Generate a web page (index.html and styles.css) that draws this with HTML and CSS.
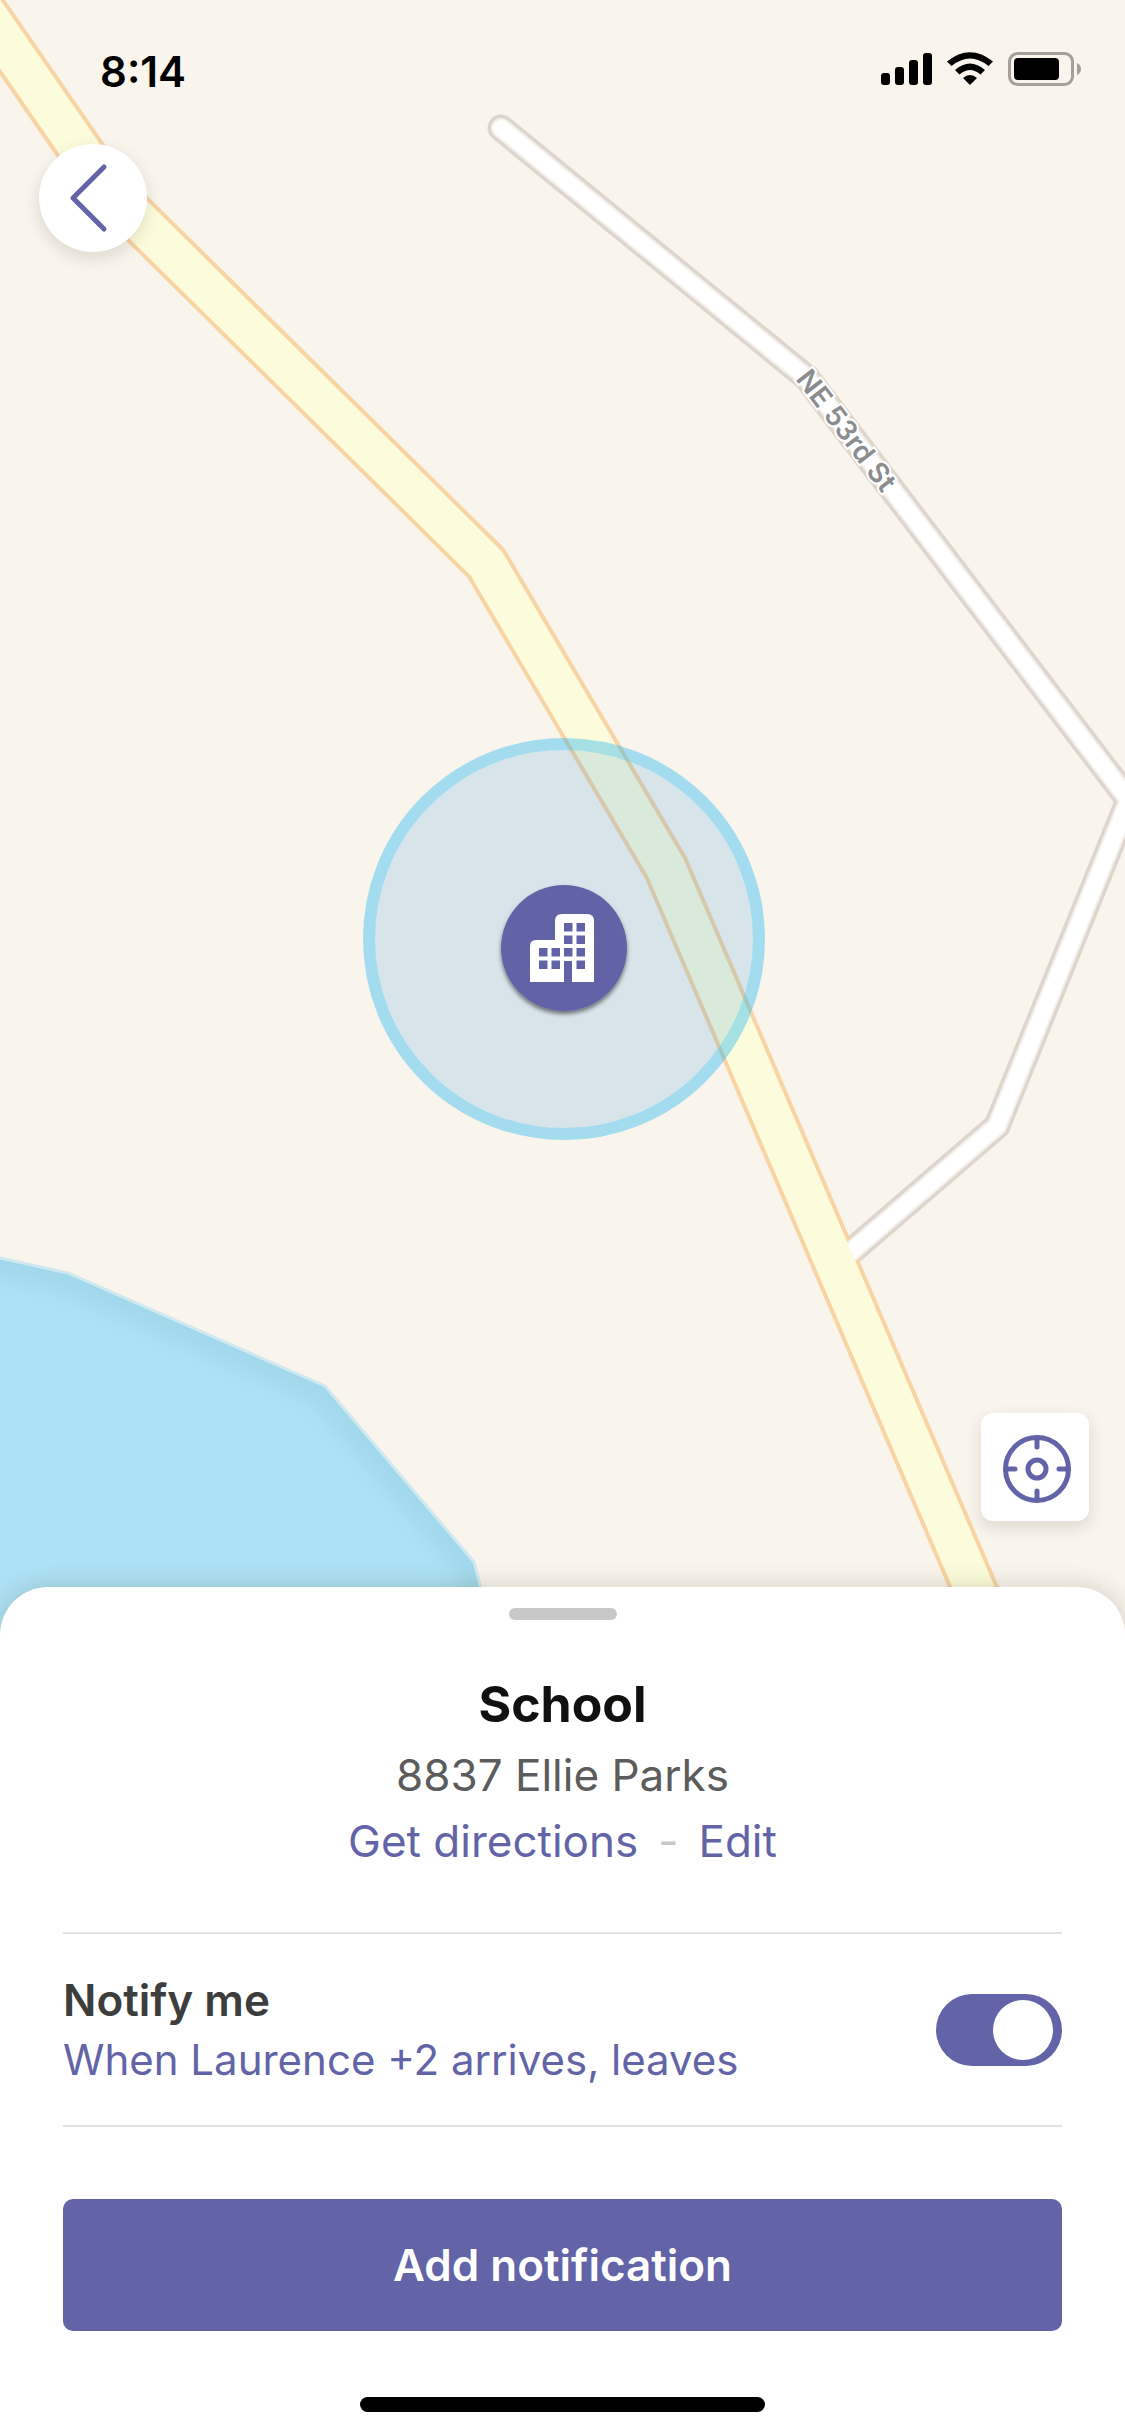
FILE: index.html
```html
<!DOCTYPE html>
<html lang="en">
<head>
    <meta charset="UTF-8">
    <meta name="viewport" content="width=device-width, initial-scale=1.0">
    <title>School</title>
    <link rel="stylesheet" href="styles.css">
</head>
<body>
    <main class="map">
        <svg class="map-canvas" viewBox="0 0 1125 1635" preserveAspectRatio="xMidYMid slice" aria-hidden="true">
            <defs>
                <path id="mainRoad" d="M-40 -24 L108 190 L486 563 L666 868 L994 1635"/>
                <path id="sideRoad" d="M501 128 L807 378 L1129 800 L997 1126 L846 1256"/>
                <path id="streetLine" d="M803 373 L810 382 L971 594"/>
                <path id="water" d="M-60 1245 L0 1258 L68 1273 L325 1386 L474 1562 L505 1680 L-60 1700 Z"/>
                <clipPath id="waterClip"><use href="#water"/></clipPath>
                <filter id="soft" x="-20%" y="-20%" width="140%" height="140%">
                    <feGaussianBlur stdDeviation="11"/>
                </filter>
                <filter id="pinShadow" x="-20%" y="-20%" width="140%" height="140%">
                    <feDropShadow dx="0" dy="3" stdDeviation="2" flood-color="#000" flood-opacity="0.5"/>
                </filter>
            </defs>

            <!-- water -->
            <use href="#water" class="water"/>
            <g clip-path="url(#waterClip)">
                <use href="#water" class="water-shade" filter="url(#soft)"/>
            </g>
            <use href="#water" class="water-edge"/>

            <!-- roads -->
            <use href="#sideRoad" class="road side-casing"/>
            <use href="#mainRoad" class="road main-casing"/>
            <use href="#sideRoad" class="road side-blend"/>
            <use href="#sideRoad" class="road side-fill"/>
            <use href="#mainRoad" class="road main-fill"/>
            <text class="street-name" dy="10"><textPath href="#streetLine">NE 53rd St</textPath></text>

            <!-- geofence -->
            <circle cx="564" cy="939" r="189" class="fence-fill"/>
            <circle cx="564" cy="939" r="195" class="fence-ring"/>

            <!-- place pin -->
            <circle cx="564" cy="948" r="63" class="pin" filter="url(#pinShadow)"/>
            <path class="pin-icon" fill-rule="evenodd" d="M530 982 V946 Q530 940 536 940 H555 V921 Q555 914 562 914 H587 Q594 914 594 921 V982 H572 V961 H564 V982 Z
                M564 923h8.500v8.500h-8.500z M576.500 923h8.500v8.500h-8.500z
                M564 935.500h8.500v8.500h-8.500z M576.500 935.500h8.500v8.500h-8.500z
                M539 948h8.500v8.500h-8.500z M551.500 948h8.500v8.500h-8.500z M564 948h8.500v8.500h-8.500z M576.500 948h8.500v8.500h-8.500z
                M539 960.500h8.500v8.500h-8.500z M551.500 960.500h8.500v8.500h-8.500z M576.500 960.500h8.500v8.500h-8.500z"/>
        </svg>

        <header class="status-bar">
            <span class="time">8:14</span>
            <svg class="status-icons" viewBox="0 0 202 36" aria-hidden="true">
                <rect x="0" y="21" width="9" height="12" rx="3"/>
                <rect x="14" y="15" width="9" height="18" rx="3"/>
                <rect x="28" y="8" width="9" height="25" rx="3"/>
                <rect x="42" y="1" width="9" height="32" rx="3"/>
                <path d="M66 9.500 Q89 -9 112 9.500 L107.500 14 Q89 -1 70.500 14 Z"/>
                <path d="M74 18 Q89 5 104 18 L99.500 22.500 Q89 13.500 78.500 22.500 Z"/>
                <path d="M82 26 Q89 20 96 26 L89 33 Z"/>
                <rect x="128.500" y="1.500" width="63" height="31" rx="8" class="battery-shell"/>
                <rect x="133" y="6" width="45" height="22" rx="4"/>
                <path d="M196 11 Q200 13 200 17 Q200 21 196 23 Z" class="battery-cap"/>
            </svg>
        </header>

        <button type="button" class="map-button back" aria-label="Back">
            <svg viewBox="0 0 108 108" aria-hidden="true">
                <path d="M65 23 L34 54 L65 85"/>
            </svg>
        </button>

        <button type="button" class="map-button locate" aria-label="Center map">
            <svg viewBox="0 0 108 108" aria-hidden="true">
                <circle cx="56" cy="56" r="31.500"/>
                <circle cx="56" cy="56" r="9"/>
                <path d="M56 25 V34 M56 78 V87 M25 56 H34 M78 56 H87"/>
            </svg>
        </button>
    </main>

    <section class="sheet">
        <div class="grabber"></div>
        <h1 class="place-name">School</h1>
        <p class="address">8837 Ellie Parks</p>
        <div class="links">
            <a href="#">Get directions</a>
            <span class="dash">-</span>
            <a href="#">Edit</a>
        </div>

        <div class="notify">
            <div class="notify-text">
                <label for="notify">Notify me</label>
                <a href="#">When Laurence +2 arrives, leaves</a>
            </div>
            <input type="checkbox" id="notify" class="toggle" checked>
        </div>

        <button type="button" class="add-button">Add notification</button>
        <div class="home-bar"></div>
    </section>
</body>
</html>
```
FILE: styles.css
```css
* {
    box-sizing: border-box;
}
body {
    margin: 0;
    min-height: 100vh;
    display: flex;
    flex-direction: column;
    font-family: Inter, "Liberation Sans", sans-serif;
    font-size: 44px;
    background-color: #fff;
}
a {
    color: #6264a7;
    text-decoration: none;
}
button {
    padding: 0;
    border: none;
    font-family: inherit;
    cursor: pointer;
}

/* map */
.map {
    position: relative;
    flex: 1;
    min-height: 600px;
    margin-bottom: -48px;
    background-color: #f9f4ec;
    overflow: hidden;
}
.map-canvas {
    position: absolute;
    width: 100%;
    height: 100%;
}
.water {
    fill: #aee1f5;
}
.water-shade {
    fill: none;
    stroke: #a0d8eb;
    stroke-width: 38px;
}
.water-edge {
    fill: none;
    stroke: #d0e9f0;
    stroke-width: 3px;
}
.road {
    fill: none;
    stroke-linecap: round;
    stroke-linejoin: miter;
}
.side-casing {
    stroke: #ded6cc;
    stroke-width: 27px;
}
.side-blend {
    stroke: #f4f1ed;
    stroke-width: 20px;
}
.side-fill {
    stroke: #fff;
    stroke-width: 16px;
}
.main-casing {
    stroke: #f8d3a4;
    stroke-width: 47px;
}
.main-fill {
    stroke: #fcfbdb;
    stroke-width: 39px;
}
.street-name {
    font-size: 28px;
    font-weight: 600;
    fill: #8b8c8e;
    stroke: #fff;
    stroke-width: 4px;
    paint-order: stroke;
}
.fence-fill {
    fill: rgba(22, 144, 223, 0.15);
}
.fence-ring {
    fill: none;
    stroke: rgba(34, 184, 243, 0.4);
    stroke-width: 12px;
}
.pin {
    fill: #6264a7;
}
.pin-icon {
    fill: #fff;
}

/* status bar */
.status-bar {
    position: relative;
    display: flex;
    justify-content: space-between;
    align-items: center;
    padding: 44px 42px 0 100px;
}
.time {
    font-size: 42px;
    font-weight: 600;
    line-height: 56px;
}
.status-icons {
    width: 202px;
    height: 36px;
    margin-bottom: 4px;
}
.battery-shell {
    fill: none;
    stroke: #a3a09b;
    stroke-width: 3px;
}
.battery-cap {
    fill: #a3a09b;
}

/* map buttons */
.map-button {
    position: absolute;
    width: 108px;
    height: 108px;
    background-color: #fff;
    box-shadow: 0 6px 16px rgba(60, 60, 20, 0.14);
}
.map-button svg {
    display: block;
    fill: none;
    stroke: #6264a7;
    stroke-width: 5px;
    stroke-linecap: round;
    stroke-linejoin: round;
}
.back {
    top: 144px;
    left: 39px;
    border-radius: 50%;
}
.locate {
    right: 36px;
    bottom: 114px;
    border-radius: 12px;
}

/* bottom sheet */
.sheet {
    position: relative;
    display: flex;
    flex-direction: column;
    padding: 21px 63px 24px;
    background-color: #fff;
    border-radius: 48px 48px 0 0;
    box-shadow: 0 0 24px rgba(60, 60, 20, 0.2);
}
.grabber {
    align-self: center;
    width: 108px;
    height: 12px;
    margin-bottom: 46px;
    border-radius: 6px;
    background-color: #c8c8c8;
}
.place-name {
    margin: 0;
    font-size: 50px;
    font-weight: 700;
    line-height: 76px;
    text-align: center;
    color: #11100f;
}
.address {
    margin: 0;
    line-height: 66px;
    text-align: center;
    color: #5c5c5c;
}
.links {
    display: flex;
    justify-content: center;
    gap: 20px;
    margin-bottom: 58px;
    line-height: 66px;
}
.dash {
    color: #c8c8c8;
}
.notify {
    display: flex;
    justify-content: space-between;
    align-items: center;
    padding: 36px 0 35px;
    border-top: 2px solid #e1e1e1;
    border-bottom: 2px solid #e1e1e1;
}
.notify-text {
    display: flex;
    flex-direction: column;
    line-height: 60px;
}
.notify-text label {
    font-weight: 600;
    color: #3d3d3d;
}
.notify-text a {
    font-size: 42px;
}
.toggle {
    flex: none;
    appearance: none;
    display: flex;
    justify-content: flex-end;
    width: 126px;
    height: 72px;
    margin: 0;
    padding: 6px 9px;
    border-radius: 36px;
    background-color: #6264a7;
    cursor: pointer;
}
.toggle::before {
    content: "";
    width: 60px;
    height: 60px;
    border-radius: 50%;
    background-color: #fff;
}
.toggle:not(:checked) {
    justify-content: flex-start;
    background-color: #c8c8c8;
}
.add-button {
    height: 132px;
    margin: 72px 0 66px;
    border-radius: 10px;
    background-color: #6264a7;
    color: #fff;
    font-size: 44px;
    font-weight: 600;
}
.home-bar {
    align-self: center;
    width: 405px;
    height: 15px;
    border-radius: 8px;
    background-color: #000;
}
```
